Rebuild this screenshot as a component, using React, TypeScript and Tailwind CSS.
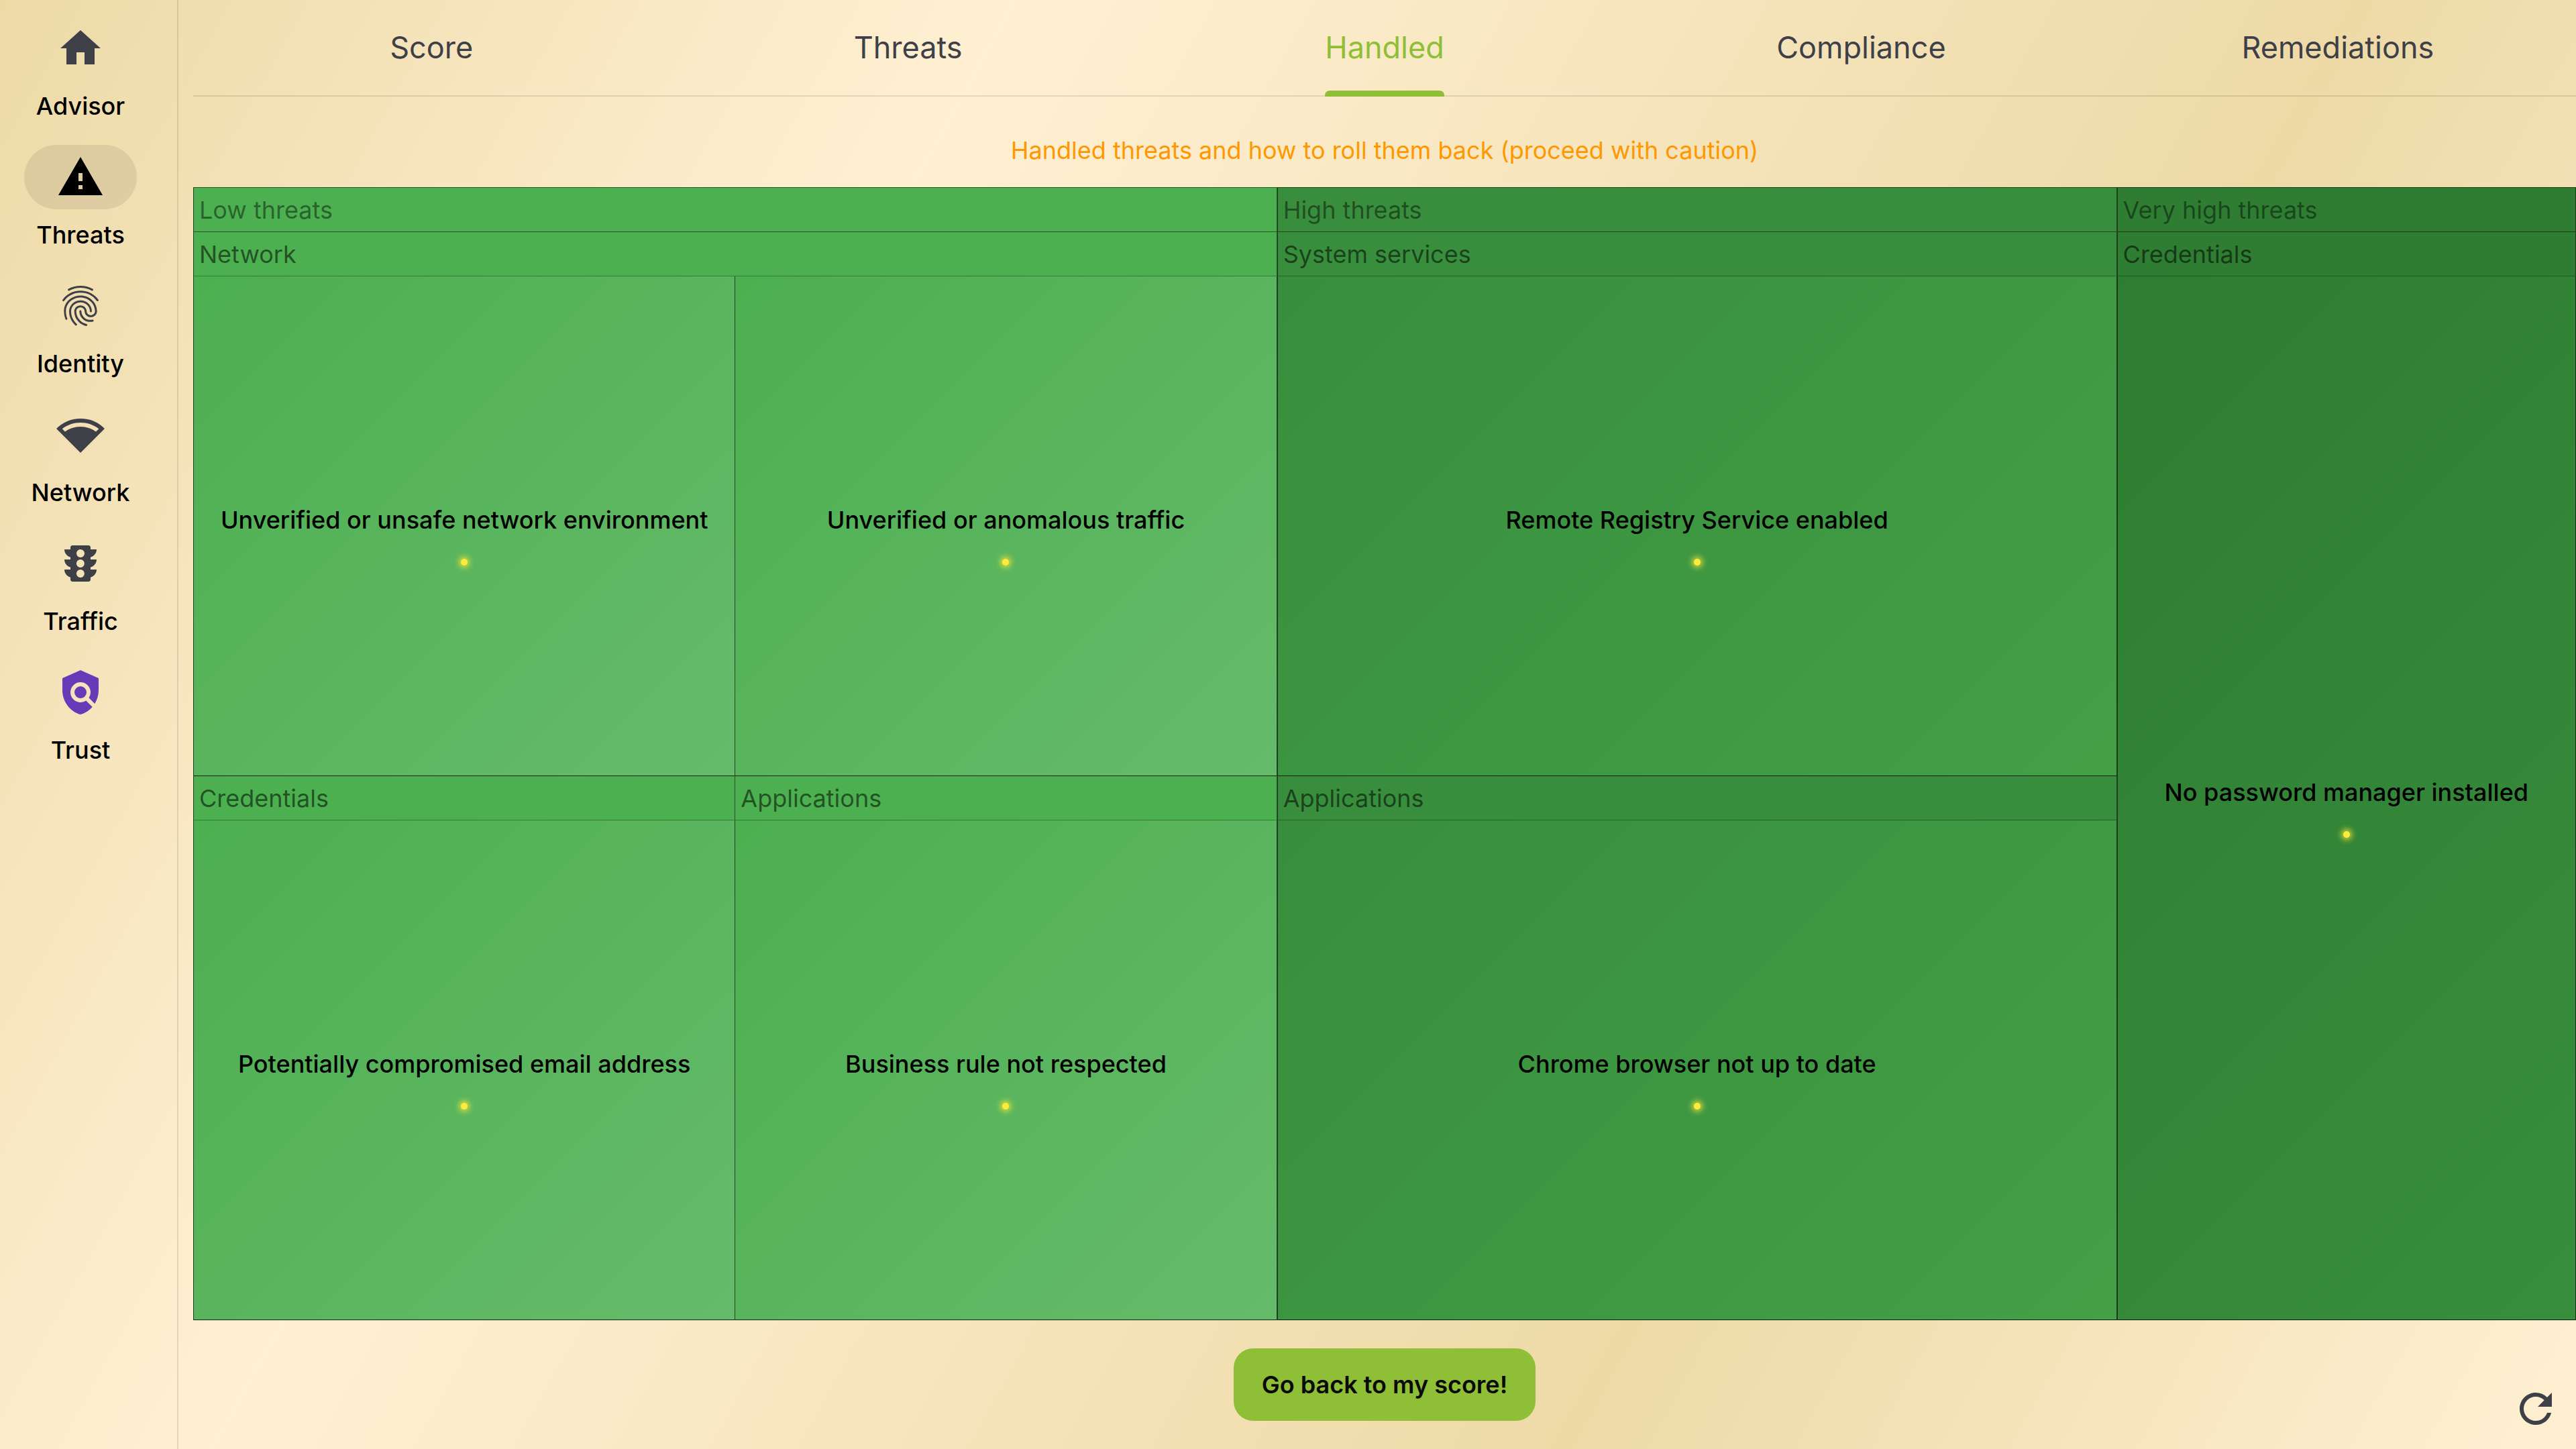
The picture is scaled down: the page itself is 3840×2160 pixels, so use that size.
import type { IconType } from "react-icons";
import {
  MdFingerprint,
  MdHome,
  MdNetworkWifi,
  MdPolicy,
  MdRefresh,
  MdTraffic,
  MdWarning,
} from "react-icons/md";

type NavItem = { label: string; icon: IconType; tint: string; active?: boolean };

const navItems: NavItem[] = [
  { label: "Advisor", icon: MdHome, tint: "text-[#3f4047]" },
  { label: "Threats", icon: MdWarning, tint: "text-black", active: true },
  { label: "Identity", icon: MdFingerprint, tint: "text-[#3f4047]" },
  { label: "Network", icon: MdNetworkWifi, tint: "text-[#3f4047]" },
  { label: "Traffic", icon: MdTraffic, tint: "text-[#3f4047]" },
  { label: "Trust", icon: MdPolicy, tint: "text-[#673ab7]" },
];

const tabs = ["Score", "Threats", "Handled", "Compliance", "Remediations"];

type Category = { name: string; threats: string[] };
type Level = {
  name: string;
  size: string;
  header: string;
  cell: string;
  rows: Category[][];
};

const levels: Level[] = [
  {
    name: "Low threats",
    size: "grow-[1616]",
    header: "bg-[#4caf50]",
    cell: "from-[#4caf50] to-[#66bb6a]",
    rows: [
      [
        {
          name: "Network",
          threats: ["Unverified or unsafe network environment", "Unverified or anomalous traffic"],
        },
      ],
      [
        { name: "Credentials", threats: ["Potentially compromised email address"] },
        { name: "Applications", threats: ["Business rule not respected"] },
      ],
    ],
  },
  {
    name: "High threats",
    size: "grow-[1252]",
    header: "bg-[#388e3c]",
    cell: "from-[#388e3c] to-[#43a047]",
    rows: [
      [{ name: "System services", threats: ["Remote Registry Service enabled"] }],
      [{ name: "Applications", threats: ["Chrome browser not up to date"] }],
    ],
  },
  {
    name: "Very high threats",
    size: "grow-[684]",
    header: "bg-[#2e7d32]",
    cell: "from-[#2e7d32] to-[#388e3c]",
    rows: [[{ name: "Credentials", threats: ["No password manager installed"] }]],
  },
];

function Sidebar() {
  return (
    <nav className="flex w-[266px] shrink-0 flex-col gap-9 border-r-2 border-black/10 pt-6 pr-6">
      {navItems.map(({ label, icon: Icon, tint, active }) => (
        <a
          key={label}
          href={`#${label.toLowerCase()}`}
          aria-current={active ? "page" : undefined}
          className="flex flex-col items-center gap-4"
        >
          <span
            className={`flex h-24 w-[168px] items-center justify-center rounded-full ${
              active ? "bg-black/8" : ""
            }`}
          >
            <Icon className={`size-18 ${tint}`} />
          </span>
          <span className="text-[36px] leading-11 font-medium">{label}</span>
        </a>
      ))}
    </nav>
  );
}

function Tabs() {
  return (
    <div role="tablist" className="flex h-36 border-b-2 border-black/10">
      {tabs.map((tab) => {
        const selected = tab === "Handled";
        return (
          <button
            key={tab}
            role="tab"
            aria-selected={selected}
            className={`flex flex-1 basis-0 justify-center text-[45px] leading-[142px] ${
              selected ? "text-[#8fbf37]" : "text-[#3f4047]"
            }`}
          >
            <span className="relative h-36">
              {tab}
              {selected && (
                <span className="absolute inset-x-0 bottom-0 h-[9px] rounded-t-[7px] bg-[#8fbf37]" />
              )}
            </span>
          </button>
        );
      })}
    </div>
  );
}

function ThreatCell({ title, tone }: { title: string; tone: string }) {
  return (
    <button
      className={`flex flex-1 basis-0 flex-col items-center justify-center border-r border-b border-r-black/60 border-b-black/80 bg-linear-[135deg] pt-7 ${tone}`}
    >
      <span className="text-[36px] leading-11 font-medium whitespace-nowrap">{title}</span>
      <span className="mt-9 size-[10px] rounded-full bg-[#ffeb3b] shadow-[0_0_8px_3px_#ffeb3bcc]" />
    </button>
  );
}

function LevelColumn({ level }: { level: Level }) {
  return (
    <section className={`flex basis-0 flex-col border-l border-[#1f3a20] ${level.size}`}>
      <h2
        className={`h-[67px] border-t border-r border-b border-black/50 pl-2 text-[36px] leading-[66px] text-black/45 ${level.header}`}
      >
        {level.name}
      </h2>
      {level.rows.map((row, index) => (
        <div key={index} className="flex flex-1 basis-0">
          {row.map((category) => (
            <div key={category.name} className="flex flex-1 basis-0 flex-col">
              <h3
                className={`h-[66px] border-r border-b border-r-black/50 border-b-black/30 pl-2 text-[36px] leading-[66px] text-black/55 ${level.header}`}
              >
                {category.name}
              </h3>
              <div className="flex flex-1">
                {category.threats.map((threat) => (
                  <ThreatCell key={threat} title={threat} tone={level.cell} />
                ))}
              </div>
            </div>
          ))}
        </div>
      ))}
    </section>
  );
}

export default function App() {
  return (
    <div className="flex h-screen bg-[linear-gradient(119deg,#eddaa7_0%,#fff0d3_30%,#eddaa7_70%,#fff0d3_100%)] font-[Inter,sans-serif] text-black">
      <Sidebar />
      <main className="relative ml-[22px] flex min-w-0 flex-1 flex-col">
        <Tabs />
        <p className="pt-[58px] pb-[33px] text-center text-[36px] leading-11 text-[#ff9800]">
          Handled threats and how to roll them back (proceed with caution)
        </p>
        <div className="flex flex-1">
          {levels.map((level) => (
            <LevelColumn key={level.name} level={level} />
          ))}
        </div>
        <footer className="flex h-48 items-center justify-center">
          <button className="h-[108px] min-w-[450px] rounded-[29px] bg-[#8fbf37] px-9 text-[36px] font-semibold text-[#0a0a0a]">
            Go back to my score!
          </button>
        </footer>
        <button aria-label="Refresh" className="absolute right-6 bottom-6 text-[#3f4047]">
          <MdRefresh className="size-18" />
        </button>
      </main>
    </div>
  );
}
